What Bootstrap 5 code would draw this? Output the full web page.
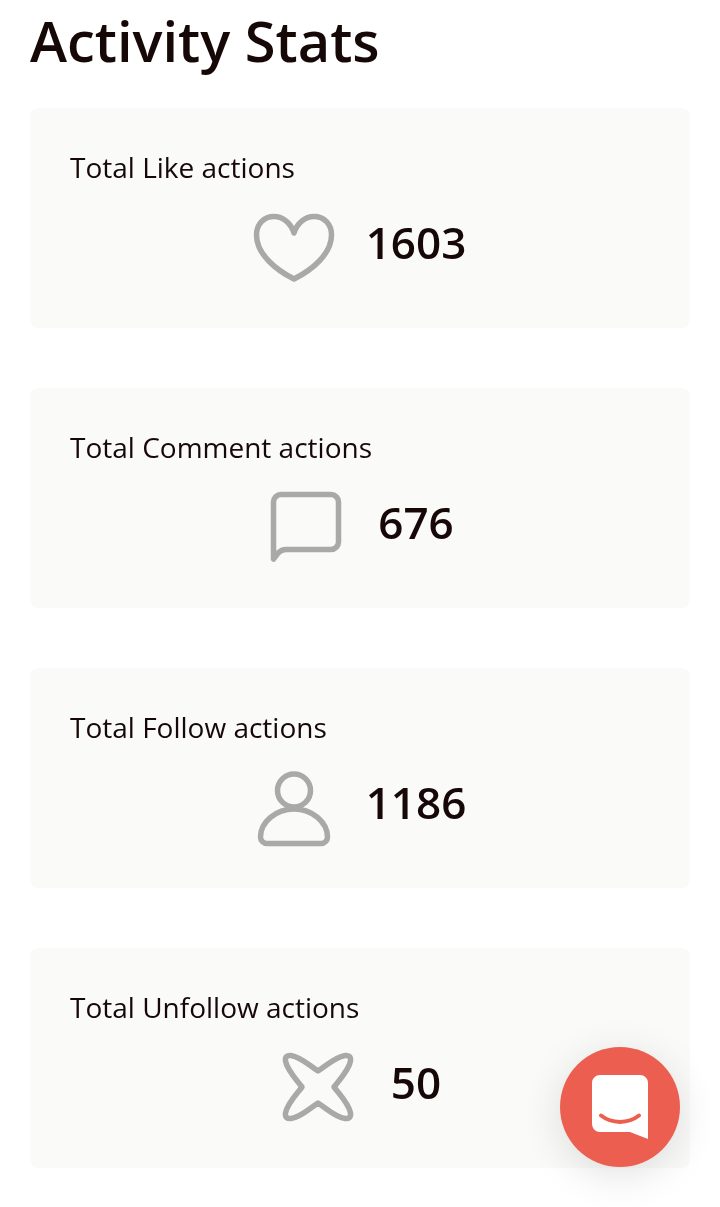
<!DOCTYPE html>
<html lang="en">
<head>
    <meta charset="UTF-8">
    <meta name="viewport" content="width=device-width, initial-scale=1.0">
    <title>Activity Stats</title>
    <link href="https://cdn.jsdelivr.net/npm/bootstrap@5.3.2/dist/css/bootstrap.min.css" rel="stylesheet">
    <style>
        body {
            font-family: "Open Sans", "Liberation Sans", sans-serif;
            color: #170808;
            background: #fff;
            overflow: hidden;
        }
        .pagina {
            padding: 0 30px;
            will-change: transform;
        }
        .titulo-pagina {
            font-size: 56px;
            font-weight: 600;
            line-height: 80px;
            margin: 0 0 28px;
        }
        .tarjeta-stat {
            background: #fafaf8;
            border-radius: 8px;
            padding: 40px 40px 44px;
            margin-bottom: 60px;
        }
        .tarjeta-label {
            font-size: 28px;
            line-height: 38px;
            margin-bottom: 18px;
        }
        .tarjeta-fila {
            gap: 32px;
        }
        .tarjeta-icono {
            width: 80px;
            height: 80px;
            overflow: visible;
            fill: none;
            stroke: #a9a9a7;
            stroke-width: 5.5;
            stroke-linejoin: round;
            stroke-linecap: round;
        }
        .tarjeta-num {
            font-size: 44px;
            font-weight: 600;
            line-height: 1;
            margin-top: -4px;
        }
        .boton-chat {
            position: fixed;
            left: 560px;
            top: 1047px;
            width: 120px;
            height: 120px;
            border-radius: 50%;
            background: #ec5f50;
            box-shadow: 0 8px 40px rgba(0, 0, 0, .12);
        }
    </style>
</head>
<body>
<div class="pagina">
    <h1 class="titulo-pagina">Activity Stats</h1>

    <div class="tarjeta-stat">
        <div class="tarjeta-label">Total Like actions</div>
        <div class="d-flex justify-content-center align-items-center tarjeta-fila">
            <svg class="tarjeta-icono" viewBox="0 0 80 80"><path d="M40 29C37 19 29 12.5 20 12.5C10 12.5 2.5 20 2.5 31C2.5 50 22 66 40 75C58 66 77.5 50 77.5 31C77.5 20 70 12.5 60 12.5C51 12.5 43 19 40 29Z"/></svg>
            <div class="tarjeta-num">1603</div>
        </div>
    </div>

    <div class="tarjeta-stat">
        <div class="tarjeta-label">Total Comment actions</div>
        <div class="d-flex justify-content-center align-items-center tarjeta-fila">
            <svg class="tarjeta-icono" viewBox="0 0 80 80"><path d="M7.5 75V18a7.5 7.5 0 0 1 7.5-7.5H65a7.5 7.5 0 0 1 7.5 7.5V58a7.5 7.5 0 0 1-7.5 7.5H20C16 65.5 14 67 12 69Z"/></svg>
            <div class="tarjeta-num">676</div>
        </div>
    </div>

    <div class="tarjeta-stat">
        <div class="tarjeta-label">Total Follow actions</div>
        <div class="d-flex justify-content-center align-items-center tarjeta-fila">
            <svg class="tarjeta-icono" viewBox="0 0 80 80"><circle cx="40" cy="26.5" r="16.5"/><path d="M13 79.5A6.5 6.5 0 0 1 6.5 73C6.5 58 22 45 40 45C58 45 73.5 58 73.5 73A6.5 6.5 0 0 1 67 79.5Z"/></svg>
            <div class="tarjeta-num">1186</div>
        </div>
    </div>

    <div class="tarjeta-stat">
        <div class="tarjeta-label">Total Unfollow actions</div>
        <div class="d-flex justify-content-center align-items-center tarjeta-fila">
            <svg class="tarjeta-icono" viewBox="0 0 80 80"><path d="M39 27C31 22 22 13 12 11.5C8 11 6 13 6.5 17C8 26 17 35 23 43C17 51 8 60 6.500 69C6 73 8 75 12 74.500C22 73 31 64 39 59C47 64 56 73 66 74.500C70 75 72 73 71.500 69C70 60 61 51 55 43C61 35 70 26 71.500 17C72 13 70 11 66 11.500C56 13 47 22 39 27Z"/></svg>
            <div class="tarjeta-num">50</div>
        </div>
    </div>
</div>

<div class="boton-chat d-flex align-items-center justify-content-center">
    <svg width="56" height="64" viewBox="0 0 56 64">
        <path d="M8 0H48a8 8 0 0 1 8 8V64L38 57H8a8 8 0 0 1-8-8V8a8 8 0 0 1 8-8Z" fill="#fff"/>
        <path d="M9 40.5C20 49 36 49 47 40.5" fill="none" stroke="#ec5f50" stroke-width="4" stroke-linecap="round"/>
    </svg>
</div>

<script src="https://cdn.jsdelivr.net/npm/bootstrap@5.3.2/dist/js/bootstrap.bundle.min.js"></script>
</body>
</html>
